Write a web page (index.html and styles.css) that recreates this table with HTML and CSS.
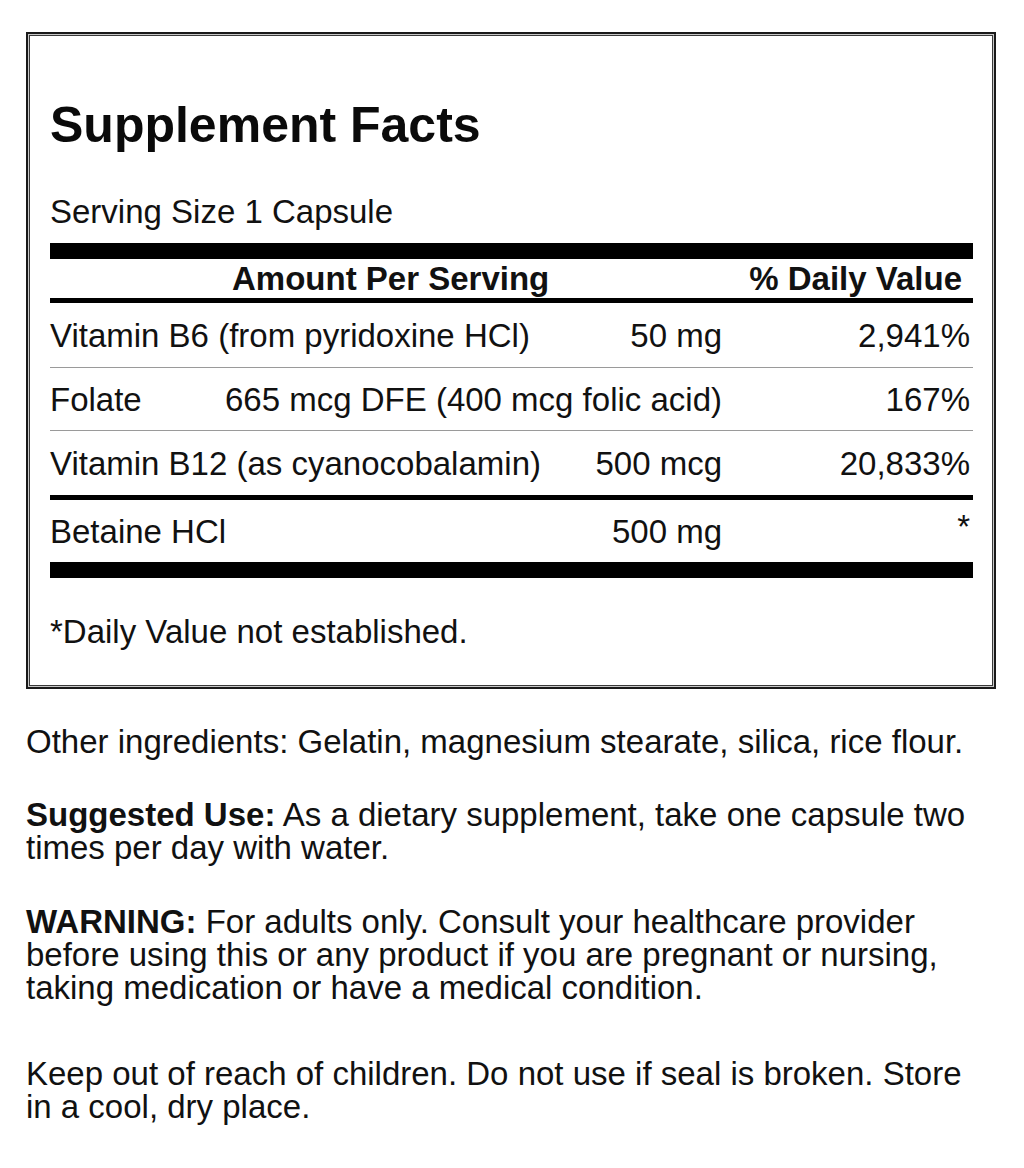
FILE: index.html
```html
<!DOCTYPE html>
<html lang="en">
<head>
<meta charset="utf-8">
<title>Supplement Facts</title>
<link rel="stylesheet" href="styles.css">
</head>
<body>
<main class="page">
  <section class="facts">
    <h1 class="facts-title">Supplement Facts</h1>
    <p class="serving">Serving Size 1 Capsule</p>
    <div class="bar bar-thick"></div>
    <div class="head-row">
      <span class="head-amount">Amount Per Serving</span>
      <span class="head-dv">% Daily Value</span>
    </div>
    <div class="row row-b6">
      <span class="name">Vitamin B6 (from pyridoxine HCl)</span>
      <span class="amount">50 mg</span>
      <span class="dv">2,941%</span>
    </div>
    <div class="row row-folate">
      <span class="name">Folate</span>
      <span class="amount">665 mcg DFE (400 mcg folic acid)</span>
      <span class="dv">167%</span>
    </div>
    <div class="row row-b12">
      <span class="name">Vitamin B12 (as cyanocobalamin)</span>
      <span class="amount">500 mcg</span>
      <span class="dv">20,833%</span>
    </div>
    <div class="row row-betaine">
      <span class="name">Betaine HCl</span>
      <span class="amount">500 mg</span>
      <span class="dv dv-star">*</span>
    </div>
    <div class="bar bar-thick"></div>
    <p class="note">*Daily Value not established.</p>
  </section>

  <p class="para para-other">Other ingredients: Gelatin, magnesium stearate, silica, rice flour.</p>
  <p class="para para-use"><strong>Suggested Use:</strong> As a dietary supplement, take one capsule two times per day with water.</p>
  <p class="para para-warn"><strong>WARNING:</strong> For adults only. Consult your healthcare provider before using this or any product if you are pregnant or nursing, taking medication or have a medical condition.</p>
  <p class="para para-keep">Keep out of reach of children. Do not use if seal is broken. Store in a cool, dry place.</p>
</main>
</body>
</html>
```

FILE: styles.css
```css
* {
  box-sizing: border-box;
}

html, body {
  margin: 0;
  padding: 0;
  background: #ffffff;
}

body {
  font-family: "Liberation Sans", Arial, Helvetica, sans-serif;
  color: #111111;
}

.page {
  padding: 32px 27px 40px 26px;
}

.facts {
  width: 970px;
  border: 2px solid #1a1a1a;
  box-shadow: inset 0 0 0 1px #c8c8c8, inset 0 0 0 2px #3a3a3a;
  padding: 66px 21px 39px 22px;
  display: flex;
  flex-direction: column;
}

.facts-title {
  margin: 0;
  font-size: 50px;
  line-height: 50px;
  font-weight: 700;
  color: #0a0a0a;
}

.serving {
  margin: 45px 0 0 0;
  font-size: 33px;
  line-height: 33px;
}

.bar {
  background: #000000;
}

.bar-thick {
  height: 16px;
}

.serving + .bar-thick {
  margin-top: 15px;
}

.head-row {
  display: flex;
  align-items: center;
  padding: 3px 11px 3px 182px;
  border-bottom: 5px solid #000000;
  font-size: 33px;
  line-height: 33px;
  font-weight: 700;
}

.head-amount {
  flex: 1;
}

.row {
  display: flex;
  align-items: center;
  font-size: 33px;
  line-height: 33px;
}

.row-b6 {
  height: 65px;
  border-bottom: 1px solid #9a9a9a;
}

.row-folate {
  height: 63px;
  border-bottom: 1px solid #9a9a9a;
}

.row-b12 {
  height: 69px;
  border-bottom: 5px solid #000000;
}

.row-betaine {
  height: 62px;
}

.name {
  flex: 1;
}

.amount {
  text-align: right;
}

.dv {
  width: 251px;
  padding-right: 3px;
  text-align: right;
}

.dv-star {
  align-self: flex-start;
  padding-top: 10px;
}

.note {
  margin: 37px 0 0 0;
  font-size: 33px;
  line-height: 33px;
}

.para {
  width: 952px;
  margin: 0;
  font-size: 33px;
  line-height: 33px;
}

.para strong {
  font-weight: 700;
}

.para-other {
  margin-top: 36px;
}

.para-use {
  margin-top: 40px;
}

.para-warn {
  margin-top: 41px;
}

.para-keep {
  margin-top: 53px;
}
```
